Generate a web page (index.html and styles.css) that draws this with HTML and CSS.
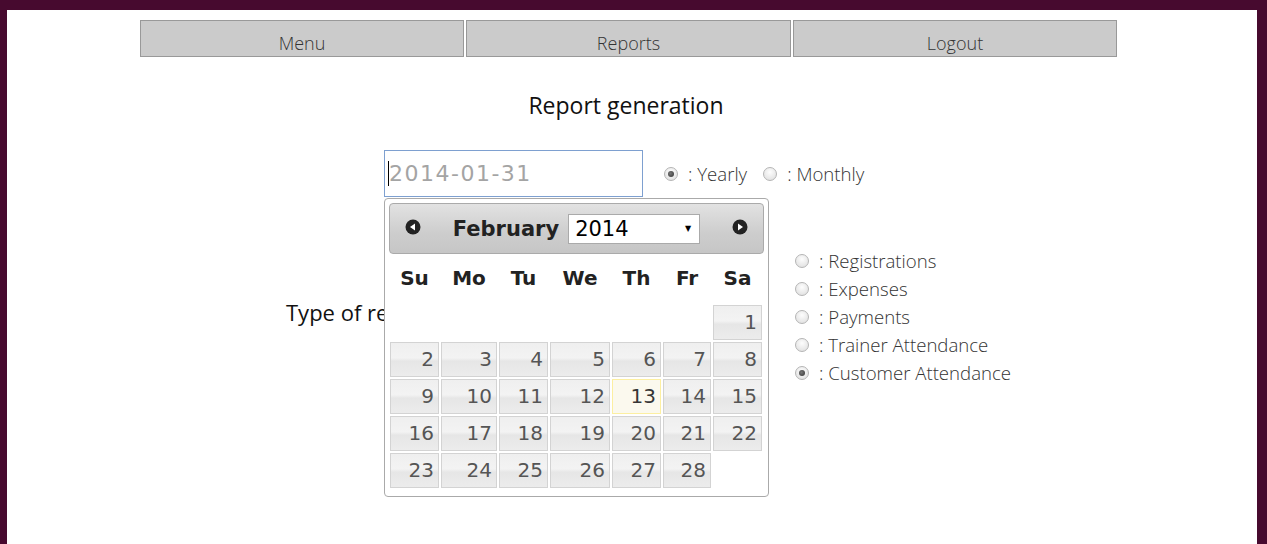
FILE: index.html
```html
<!DOCTYPE html>
<html>
<head>
<meta charset="utf-8">
<link rel="stylesheet" href="styles.css">
</head>
<body>
<div class="page">
  <nav class="nav">
    <a class="navbtn">Menu</a>
    <a class="navbtn">Reports</a>
    <a class="navbtn">Logout</a>
  </nav>
  <h1 class="title">Report generation</h1>
  <div class="daterow">
    <div class="datewrap">
      <input class="dateinput" type="text" placeholder="2014-01-31">
      <span class="caret"></span>
      <div class="picker">
        <div class="phead">
          <span class="navicon"><svg width="16" height="16" viewBox="0 0 16 16"><circle cx="8" cy="8" r="7.5" fill="#222"/><path d="M5 8 L10 4.5 L10 11.5 Z" fill="#fff"/></svg></span>
          <div class="ptitle">
            <span class="month">February</span>
            <span class="yearsel">2014<span class="arrow">▼</span></span>
          </div>
          <span class="navicon"><svg width="16" height="16" viewBox="0 0 16 16"><circle cx="8" cy="8" r="7.5" fill="#222"/><path d="M11 8 L6 4.5 L6 11.5 Z" fill="#fff"/></svg></span>
        </div>
        <div class="cal">
          <div class="dow">Su</div><div class="dow">Mo</div><div class="dow">Tu</div><div class="dow">We</div><div class="dow">Th</div><div class="dow">Fr</div><div class="dow">Sa</div>
          <div class="empty"></div><div class="empty"></div><div class="empty"></div><div class="empty"></div><div class="empty"></div><div class="empty"></div><div class="day">1</div>
          <div class="day">2</div><div class="day">3</div><div class="day">4</div><div class="day">5</div><div class="day">6</div><div class="day">7</div><div class="day">8</div>
          <div class="day">9</div><div class="day">10</div><div class="day">11</div><div class="day">12</div><div class="day today">13</div><div class="day">14</div><div class="day">15</div>
          <div class="day">16</div><div class="day">17</div><div class="day">18</div><div class="day">19</div><div class="day">20</div><div class="day">21</div><div class="day">22</div>
          <div class="day">23</div><div class="day">24</div><div class="day">25</div><div class="day">26</div><div class="day">27</div><div class="day">28</div>
        </div>
      </div>
    </div>
    <label class="opt"><input class="radio" type="radio" name="period" checked><span>: Yearly</span></label>
    <label class="opt"><input class="radio" type="radio" name="period"><span>: Monthly</span></label>
  </div>
  <div class="typerow">
    <div class="typelabel">Type of report</div>
    <div class="typelist">
      <label class="opt"><input class="radio" type="radio" name="type"><span>: Registrations</span></label>
      <label class="opt"><input class="radio" type="radio" name="type"><span>: Expenses</span></label>
      <label class="opt"><input class="radio" type="radio" name="type"><span>: Payments</span></label>
      <label class="opt"><input class="radio" type="radio" name="type"><span>: Trainer Attendance</span></label>
      <label class="opt"><input class="radio" type="radio" name="type" checked><span>: Customer Attendance</span></label>
    </div>
  </div>
</div>
</body>
</html>
```
FILE: styles.css
```css
html, body {
  margin: 0;
  padding: 0;
}
body {
  background: #470a2f;
  padding: 10px 10px 0 7px;
  height: 544px;
  box-sizing: border-box;
  overflow: hidden;
  font-family: "Open Sans", "Liberation Sans", sans-serif;
}
.page {
  background: #fff;
  height: 534px;
  padding-top: 10px;
  box-sizing: border-box;
}
.nav {
  display: flex;
  gap: 2px;
  margin-left: 133px;
}
.navbtn {
  box-sizing: border-box;
  width: 324px;
  height: 37px;
  border: 1px solid #999;
  background: #cbcbcb;
  color: #333;
  font-weight: 300;
  font-size: 18px;
  line-height: 24px;
  padding-top: 10px;
  text-align: center;
}
.navbtn:nth-child(2) { width: 325px; }
.title {
  margin: 33px 12px 0 0;
  font-size: 23px;
  line-height: 30px;
  font-weight: 400;
  text-align: center;
  color: #111;
}
.daterow {
  display: flex;
  align-items: center;
  margin-top: 30px;
  padding-left: 377px;
}
.datewrap {
  position: relative;
  margin-right: 21px;
}
.dateinput {
  box-sizing: border-box;
  width: 259px;
  height: 47px;
  border: 1px solid #7ea0d0;
  padding: 0 0 0 4px;
  font-family: "DejaVu Sans", sans-serif;
  font-size: 22px;
  letter-spacing: 1.5px;
  outline: none;
  display: block;
}
.dateinput::placeholder { color: #a4a4a4; }
.caret {
  position: absolute;
  left: 4px;
  top: 11px;
  width: 1px;
  height: 25px;
  background: #000;
}
.opt {
  display: flex;
  align-items: center;
  font-size: 18.6px;
  font-weight: 300;
  color: #333;
  line-height: 28px;
}
.opt + .opt { margin-left: 16px; }
.radio {
  appearance: none;
  -webkit-appearance: none;
  width: 14px;
  height: 14px;
  margin: 0 10px 0 0;
  border-radius: 50%;
  border: 1px solid #b5b5b5;
  background: radial-gradient(circle at 50% 35%, #fdfdfd, #dcdcdc);
  box-sizing: border-box;
  position: relative;
}
.radio:checked::after {
  content: "";
  position: absolute;
  left: 3px;
  top: 3px;
  width: 6px;
  height: 6px;
  border-radius: 50%;
  background: radial-gradient(circle at 40% 40%, #777, #333);
}
.typerow {
  display: flex;
  align-items: center;
  margin-top: 50px;
  padding-left: 279px;
}
.typelabel {
  width: 509px;
  font-size: 22px;
  color: #111;
  margin-bottom: 10px;
}
.typelist {
  display: flex;
  flex-direction: column;
}
.typelist .opt + .opt { margin-left: 0; }
/* datepicker */
.picker {
  position: absolute;
  left: 0;
  top: 48px;
  z-index: 5;
  width: 385px;
  box-sizing: border-box;
  border: 1px solid #aaa;
  border-radius: 4px;
  background: #fff;
  padding: 4px 4px 8px 4px;
  font-family: "DejaVu Sans", "Verdana", sans-serif;
}
.phead {
  height: 51px;
  box-sizing: border-box;
  border: 1px solid #aaa;
  border-radius: 4px;
  background: linear-gradient(#e2e2e2, #cdcdcd 60%, #c6c6c6);
  display: flex;
  align-items: center;
  justify-content: space-between;
  padding: 0 15px;
}
.navicon {
  width: 16px;
  height: 16px;
  display: block;
  margin-top: -4px;
}
.navicon svg { display: block; }
.ptitle {
  display: flex;
  align-items: center;
  gap: 9px;
}
.month {
  font-weight: bold;
  font-size: 21px;
  color: #222;
}
.yearsel {
  box-sizing: border-box;
  width: 132px;
  height: 30px;
  background: #fff;
  border: 1px solid #aaa;
  font-size: 21px;
  line-height: 28px;
  padding-left: 6px;
  color: #000;
  position: relative;
}
.arrow {
  position: absolute;
  right: 8px;
  top: 0;
  font-size: 8px;
  line-height: 28px;
}
.cal {
  display: grid;
  grid-template-columns: 49px 56px 49px 60px 49px 48px 49px;
  grid-template-rows: 49px repeat(5, 35px);
  gap: 2px;
  margin: 0 0 0 1px;
}
.dow {
  font-weight: bold;
  font-size: 20px;
  color: #222;
  text-align: center;
  line-height: 49px;
}
.day {
  box-sizing: border-box;
  border: 1px solid #d3d3d3;
  background: linear-gradient(#efefef, #f3f3f3 45%, #e6e6e6 55%, #ececec);
  color: #555;
  font-size: 20px;
  line-height: 33px;
  text-align: right;
  padding-right: 4px;
}
.day.today {
  border-color: #fcefa1;
  background: #fbf9ee;
  color: #363636;
}
```
